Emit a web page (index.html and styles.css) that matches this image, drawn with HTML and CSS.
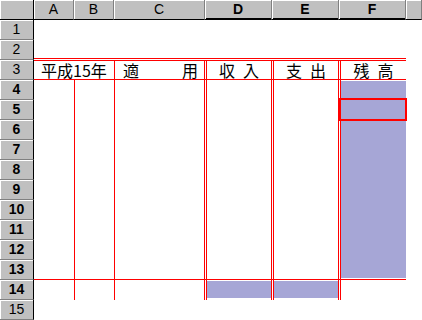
FILE: index.html
```html
<!DOCTYPE html>
<html lang="ja">
<head>
<meta charset="utf-8">
<title>平成15年 出納帳</title>
<link rel="stylesheet" href="styles.css">
</head>
<body>
<div class="sheet">
  <div class="colhead">
    <div class="hc corner"></div>
    <div class="hc ca">A</div>
    <div class="hc cb">B</div>
    <div class="hc cc">C</div>
    <div class="hc cd sel">D</div>
    <div class="hc ce sel">E</div>
    <div class="hc cf sel">F</div>
    <div class="hc cg"></div>
  </div>
  <div class="body">
    <div class="rowhead">
      <div class="hr">1</div>
      <div class="hr">2</div>
      <div class="hr">3</div>
      <div class="hr sel">4</div>
      <div class="hr sel">5</div>
      <div class="hr sel">6</div>
      <div class="hr sel">7</div>
      <div class="hr sel">8</div>
      <div class="hr sel">9</div>
      <div class="hr sel">10</div>
      <div class="hr sel">11</div>
      <div class="hr sel">12</div>
      <div class="hr sel">13</div>
      <div class="hr sel">14</div>
      <div class="hr">15</div>
    </div>
    <div class="cells">
      <div class="blank"></div>
      <div class="ledger">
        <div class="c head date">平成15年</div>
        <div class="c head bl memo"><span>適</span><span>用</span></div>
        <div class="c head dl lbl"><span>収</span><span>入</span></div>
        <div class="c head dl lbl"><span>支</span><span>出</span></div>
        <div class="c head dl lbl"><span>残</span><span>高</span></div>

        <div class="c"></div>
        <div class="c bl"></div>
        <div class="c bl"></div>
        <div class="c dl"></div>
        <div class="c dl"></div>
        <div class="c dl balance"><div class="active"></div></div>

        <div class="t"></div>
        <div class="t bl"></div>
        <div class="t bl"></div>
        <div class="t dl total"></div>
        <div class="t dl total"></div>
        <div class="t dl"></div>
      </div>
    </div>
  </div>
</div>
</body>
</html>
```

FILE: styles.css
```css
html, body {
  margin: 0;
  padding: 0;
  background: #ffffff;
}

body {
  width: 422px;
  height: 320px;
  overflow: hidden;
  font-family: "Liberation Sans", Arial, sans-serif;
  color: #000;
}

.sheet {
  display: flex;
  flex-direction: column;
  width: 422px;
  height: 320px;
}

/* column headers */
.colhead {
  display: flex;
  height: 20px;
  flex: none;
}

.hc {
  box-sizing: border-box;
  flex: none;
  height: 20px;
  background: #c0c0c0;
  border-right: 1px solid #808080;
  border-bottom: 1px solid #000;
  box-shadow: inset 1px 1px 0 #ffffff;
  font-size: 14px;
  line-height: 19px;
  text-align: center;
}

.hc.sel {
  font-weight: bold;
  box-shadow: inset 1px 1px 0 #ffffff, inset 0 -1px 0 #000;
}

.corner { width: 34px; border-right-color: #000; }
.ca { width: 40px; }
.cb { width: 40px; }
.cc { width: 91px; }
.cd, .ce, .cf { width: 67px; }
.cg { flex: 1; }

/* body */
.body {
  display: flex;
  flex: 1;
}

.rowhead {
  display: flex;
  flex-direction: column;
  width: 34px;
  flex: none;
}

.hr {
  box-sizing: border-box;
  height: 20px;
  flex: none;
  background: #c0c0c0;
  border-right: 1px solid #000;
  border-bottom: 1px solid #808080;
  box-shadow: inset 1px 1px 0 #ffffff;
  font-size: 14px;
  line-height: 19px;
  text-align: center;
}

.hr.sel {
  font-weight: bold;
}

.cells {
  flex: 1;
  display: flex;
  flex-direction: column;
}

.blank {
  height: 38px;
  flex: none;
}

/* ledger table */
.ledger {
  display: grid;
  grid-template-columns: 40px 40px 90px 67px 67px 68px;
  grid-template-rows: 19px 200px 20px;
  width: 372px;
  border-top: 3px double #ff0000;
}

.c, .t {
  box-sizing: border-box;
  min-width: 0;
}

.c {
  border-bottom: 1px solid #ff0000;
}

.bl { border-left: 1px solid #ff0000; }
.dl { border-left: 3px double #ff0000; }

.head {
  font-family: "Noto Sans CJK JP", "Liberation Sans", sans-serif;
  font-size: 16px;
  line-height: 18px;
  white-space: nowrap;
}

.date {
  grid-column: span 2;
  text-align: center;
}

.memo {
  display: flex;
  justify-content: space-between;
  padding: 0 6px 0 8px;
}

.lbl {
  display: flex;
  justify-content: center;
  gap: 8px;
}

.balance {
  position: relative;
  padding: 1px 0;
  background: #a6a6d6;
  background-clip: content-box;
}

.active {
  position: absolute;
  left: -2px;
  top: 18px;
  width: 68px;
  height: 23px;
  box-sizing: border-box;
  border: 2px solid #ff0000;
}

.total {
  padding: 1px 0 2px;
  background: #a6a6d6;
  background-clip: content-box;
}
```
